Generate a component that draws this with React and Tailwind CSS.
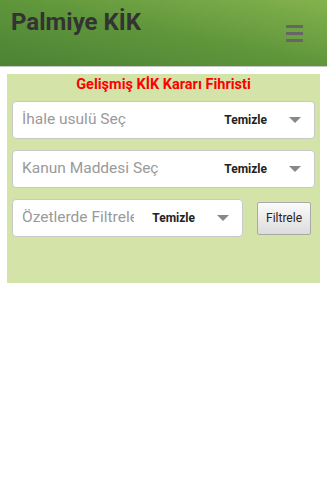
import React from "react";

function Caret() {
    return <span className="w-0 h-0 border-l-[6px] border-r-[6px] border-t-[6px] border-l-transparent border-r-transparent border-t-[#888]" />;
}

function SelectBox({ placeholder, className = "", clip = "" }) {
    return (
        <div className={`flex items-center h-[38px] bg-white border border-[#c8c8c8] rounded-[4px] pl-[9px] pr-[13px] ${className}`}>
            <div className="flex-1 mr-[12px] min-w-0">
                <div className={`text-[15.5px] text-[#9a9a9a] whitespace-nowrap overflow-hidden ${clip}`}>{placeholder}</div>
            </div>
            <span className="text-[12px] font-bold text-[#222] mr-[22px]">Temizle</span>
            <Caret />
        </div>
    );
}

export default function App() {
    return (
        <div className="min-h-[494px] bg-white" style={{ fontFamily: "Roboto, 'Liberation Sans', sans-serif" }}>
            <div className="h-[67px] bg-gradient-to-tr from-[#4b8234] via-[#5f963b] to-[#84b24d] border-b border-[#c5c9c2] flex justify-between px-[11px]">
                <h1 className="text-[24px] font-bold text-[#333] leading-none pt-[10px]">Palmiye KİK</h1>
                <div className="flex flex-col gap-[4px] pt-[25px] pr-[13px]">
                    <span className="w-[17px] h-[3px] bg-[#666]" />
                    <span className="w-[17px] h-[3px] bg-[#666]" />
                    <span className="w-[17px] h-[3px] bg-[#666]" />
                </div>
            </div>

            <div className="mx-[7px] mt-[7px] h-[209px] bg-[#d4e4a8] px-[5px] pt-[2px]">
                <h2 className="text-center text-[14.5px] font-bold text-[#f00] leading-[18px]">Gelişmiş KİK Kararı Fihristi</h2>
                <div className="flex flex-col gap-[11px] mt-[7px]">
                    <SelectBox placeholder="İhale usulü Seç" />
                    <SelectBox placeholder="Kanun Maddesi Seç" />
                    <div className="flex items-center">
                        <SelectBox placeholder="Özetlerde Filtrele" className="w-[231px]" clip="w-[112px]" />
                        <button className="ml-[14px] w-[54px] h-[33px] rounded-[2px] border border-[#aaa] bg-gradient-to-b from-[#fafafa] to-[#dcdcdc] text-[12px] text-[#222]">Filtrele</button>
                    </div>
                </div>
            </div>
        </div>
    );
}
